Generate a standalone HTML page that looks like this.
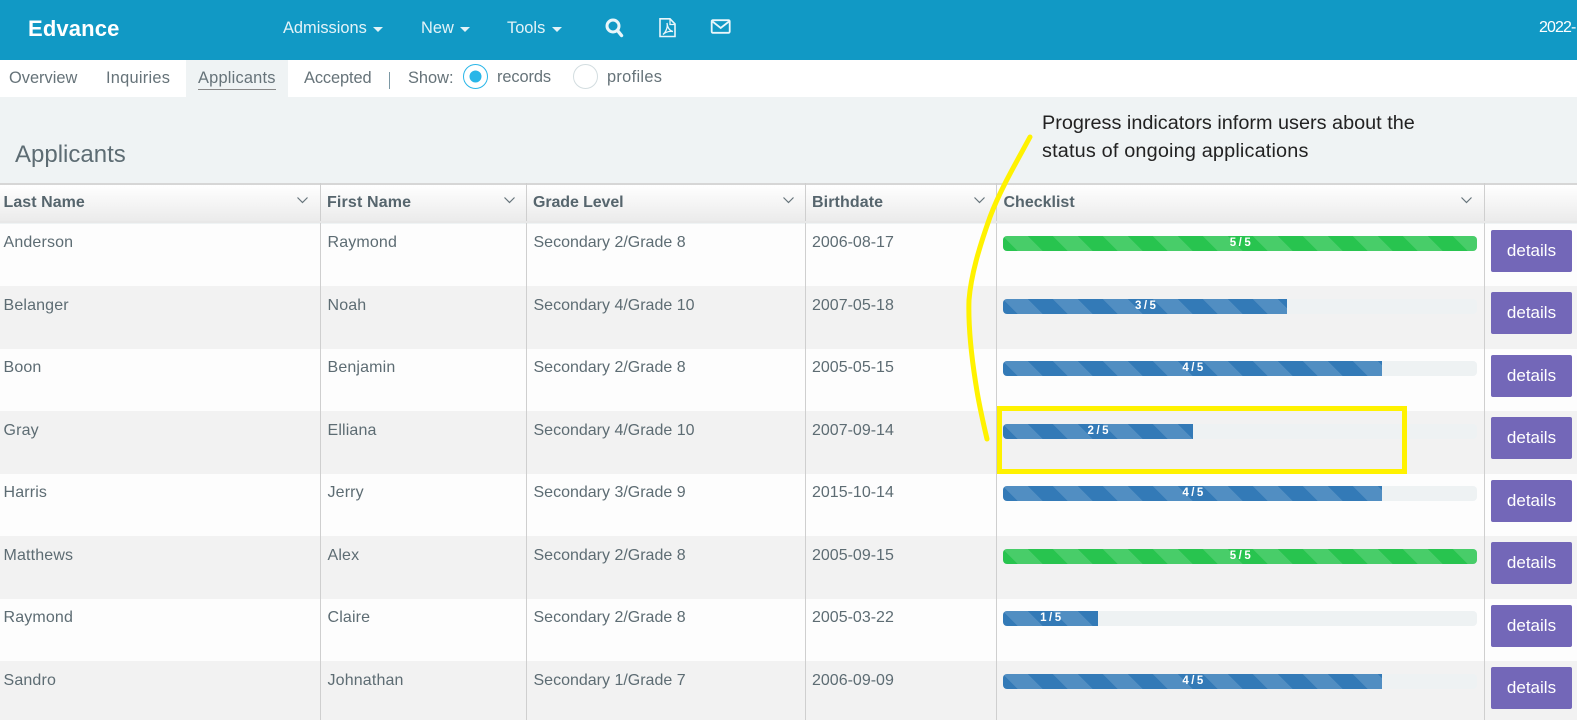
<!DOCTYPE html>
<html><head><meta charset="utf-8"><title>Edvance</title>
<style>
html,body{margin:0;padding:0;width:1577px;height:720px;overflow:hidden;background:#eff3f4}
body{position:relative;font-family:"Liberation Sans",sans-serif;color:#5d6c73;font-size:16px}
.t{position:absolute;white-space:nowrap;line-height:20px}
.nav{position:absolute;left:0;top:0;width:1577px;height:60px;background:#1199c5;box-shadow:0 1px 3px rgba(0,0,0,.15)}
.nav .t{color:#e3f3f8;font-size:16.4px}
.caret{position:absolute;width:0;height:0;border-left:5px solid transparent;border-right:5px solid transparent;border-top:5px solid #e3f3f8;top:27px}
.sub{position:absolute;left:0;top:60px;width:1577px;height:37px;background:#fff}
.sub .t{font-size:16.4px;color:#667379}
.th{position:absolute;left:0;top:183px;width:1577px;background:linear-gradient(#fff,#ebebeb);border-top:2px solid #d6d6d6;border-bottom:2px solid #dcdcdc;box-sizing:border-box;height:40px}
.th .t{font-weight:bold;color:#56656d;top:8px}
.vl{position:absolute;width:1px;background:#cfcfcf}
.r{position:absolute;left:0;width:1577px;height:62.5px}
.r .t{top:9.5px}
.o{background:#fdfdfd}.e{background:#f2f2f2}
.c1{left:3.5px;letter-spacing:.15px}.c2{left:327.5px;letter-spacing:.15px}.c3{left:533.5px}.c4{left:812px}
.track{position:absolute;left:1003px;top:12.5px;width:474px;height:15px;background:#eef2f3;border-radius:4px;overflow:hidden}
.bar{height:15px;position:relative;box-sizing:border-box;padding-left:3px;background-color:#337ab7;background-image:linear-gradient(45deg,rgba(255,255,255,.15) 25%,transparent 25%,transparent 50%,rgba(255,255,255,.15) 50%,rgba(255,255,255,.15) 75%,transparent 75%,transparent);background-size:50px 50px;color:#fff;font-size:11.5px;font-weight:bold;letter-spacing:2.5px;text-align:center;line-height:15px}
.g{background-color:#28c44f}
.btn{position:absolute;left:1491px;top:6px;width:81px;height:42px;background:#7367b8;border-radius:2px;color:#fff;text-align:center;line-height:42px;font-size:17px}
.note{position:absolute;left:1042px;color:#222;font-size:19.85px;line-height:24px;white-space:nowrap}
svg{position:absolute;overflow:visible}
</style></head>
<body>
<div class="nav">
<div class="t" style="left:28px;top:18px;font-size:22px;font-weight:bold;color:#fff;line-height:22px;letter-spacing:.15px">Edvance</div>
<div class="t" style="left:283px;top:18px">Admissions</div><div class="caret" style="left:373px"></div>
<div class="t" style="left:421px;top:18px">New</div><div class="caret" style="left:460px"></div>
<div class="t" style="left:507px;top:18px">Tools</div><div class="caret" style="left:552px"></div>
<svg style="left:0;top:0" width="800" height="60" fill="none" stroke="#eaf6fa">
<circle cx="613" cy="26" r="6" stroke-width="3"/><path d="M617.500 30.500L621.500 35.500" stroke-width="3.400" stroke-linecap="round"/>
<path d="M660 18.800H670L675 24V36.500H660Z" stroke-width="1.600"/><path d="M670 19V24.500H675" stroke-width="1.300"/><path d="M663 34.500C666 32 668 27 667 23C667.500 28 670 31 673 31.500C669 31 665.500 32 663 34.500Z" stroke-width="1.300"/>
<rect x="711.700" y="20.200" width="18" height="12.600" rx="1.200" stroke-width="1.800"/><path d="M712.500 21.500L720.700 28L729 21.500" stroke-width="1.800"/>
</svg>
<div class="t" style="left:1539px;top:18px;color:#fff;font-size:16px;letter-spacing:-.9px">2022-</div>
</div>
<div class="sub">
<div style="position:absolute;left:186px;top:0;width:102px;height:37px;background:#eff3f4"></div>
<div class="t" style="left:9px;top:8px">Overview</div>
<div class="t" style="left:106px;top:8px;letter-spacing:.25px">Inquiries</div>
<div class="t" style="left:198px;top:8px;letter-spacing:.2px">Applicants</div>
<div style="position:absolute;left:198px;top:29px;width:78px;height:1px;background:#888"></div>
<div class="t" style="left:304px;top:8px;letter-spacing:-.1px">Accepted</div>
<div style="position:absolute;left:389px;top:12px;width:1px;height:17px;background:#7c98a4"></div>
<div class="t" style="left:408px;top:8px">Show:</div>
<svg style="left:0;top:0" width="700" height="37" fill="none">
<circle cx="475.500" cy="16.500" r="12" stroke="#29b6e8" stroke-width="1"/><circle cx="475.500" cy="16.500" r="6" fill="#29b6e8"/>
<circle cx="585.500" cy="16.500" r="12" stroke="#d3dde0" stroke-width="1"/>
</svg>
<div class="t" style="left:497px;top:7px;letter-spacing:-.1px">records</div>
<div class="t" style="left:607px;top:7px;letter-spacing:.3px">profiles</div>
</div>
<div class="t" style="left:15px;top:141px;font-size:24px;line-height:28px;color:#5d6c73">Applicants</div>
<div class="note" style="top:110.500px">Progress indicators inform users about the</div>
<div class="note" style="top:139px;letter-spacing:.17px">status of ongoing applications</div>
<div class="th">
<div class="t" style="left:3.500px;letter-spacing:.05px">Last Name</div>
<div class="t" style="left:327px;letter-spacing:.15px">First Name</div>
<div class="t" style="left:533px;letter-spacing:-.1px">Grade Level</div>
<div class="t" style="left:812px;letter-spacing:.1px">Birthdate</div>
<div class="t" style="left:1003.500px">Checklist</div>
</div>
<svg style="left:0;top:183px" width="1577" height="38" fill="none" stroke="#66747b" stroke-width="1.200">
<path d="M297.500 14.500L302.500 19.500L307.500 14.500M504.500 14.500L509.500 19.500L514.500 14.500M783.500 14.500L788.500 19.500L793.500 14.500M974.500 14.500L979.500 19.500L984.500 14.500M1461.500 14.500L1466.500 19.500L1471.500 14.500"/>
</svg>

<div class="r o" style="top:223.500px"><div class="t c1">Anderson</div><div class="t c2">Raymond</div><div class="t c3">Secondary 2/Grade 8</div><div class="t c4">2006-08-17</div><div class="track"><div class="bar g" style="width:100%">5/5</div></div><div class="btn">details</div></div>
<div class="r e" style="top:286px"><div class="t c1">Belanger</div><div class="t c2">Noah</div><div class="t c3">Secondary 4/Grade 10</div><div class="t c4">2007-05-18</div><div class="track"><div class="bar" style="width:60%">3/5</div></div><div class="btn">details</div></div>
<div class="r o" style="top:348.500px"><div class="t c1">Boon</div><div class="t c2">Benjamin</div><div class="t c3">Secondary 2/Grade 8</div><div class="t c4">2005-05-15</div><div class="track"><div class="bar" style="width:80%">4/5</div></div><div class="btn">details</div></div>
<div class="r e" style="top:411px"><div class="t c1">Gray</div><div class="t c2">Elliana</div><div class="t c3">Secondary 4/Grade 10</div><div class="t c4">2007-09-14</div><div class="track"><div class="bar" style="width:40%">2/5</div></div><div class="btn">details</div></div>
<div class="r o" style="top:473.500px"><div class="t c1">Harris</div><div class="t c2">Jerry</div><div class="t c3">Secondary 3/Grade 9</div><div class="t c4">2015-10-14</div><div class="track"><div class="bar" style="width:80%">4/5</div></div><div class="btn">details</div></div>
<div class="r e" style="top:536px"><div class="t c1">Matthews</div><div class="t c2">Alex</div><div class="t c3">Secondary 2/Grade 8</div><div class="t c4">2005-09-15</div><div class="track"><div class="bar g" style="width:100%">5/5</div></div><div class="btn">details</div></div>
<div class="r o" style="top:598.500px"><div class="t c1">Raymond</div><div class="t c2">Claire</div><div class="t c3">Secondary 2/Grade 8</div><div class="t c4">2005-03-22</div><div class="track"><div class="bar" style="width:20%">1/5</div></div><div class="btn">details</div></div>
<div class="r e" style="top:661px"><div class="t c1">Sandro</div><div class="t c2">Johnathan</div><div class="t c3">Secondary 1/Grade 7</div><div class="t c4">2006-09-09</div><div class="track"><div class="bar" style="width:80%">4/5</div></div><div class="btn">details</div></div>

<div class="vl" style="left:320px;top:183px;height:537px"></div>
<div class="vl" style="left:526px;top:183px;height:537px"></div>
<div class="vl" style="left:805px;top:183px;height:537px"></div>
<div class="vl" style="left:996px;top:183px;height:537px"></div>
<div class="vl" style="left:1484px;top:183px;height:537px"></div>
<div style="position:absolute;left:0;top:221px;width:1577px;height:2px;background:#e8e8e8"></div>

<svg style="left:0;top:0" width="1577" height="720" fill="none" stroke="#fff200">
<path d="M1030 137C1016 163 1000 190 990 217C979 248 971 275 969 300C968 330 972 360 976 385C979 405 983 422 987 439" stroke-width="5" stroke-linecap="round"/>
<rect x="999.500" y="408.500" width="405" height="63" stroke-width="5"/>
</svg>
</body></html>
